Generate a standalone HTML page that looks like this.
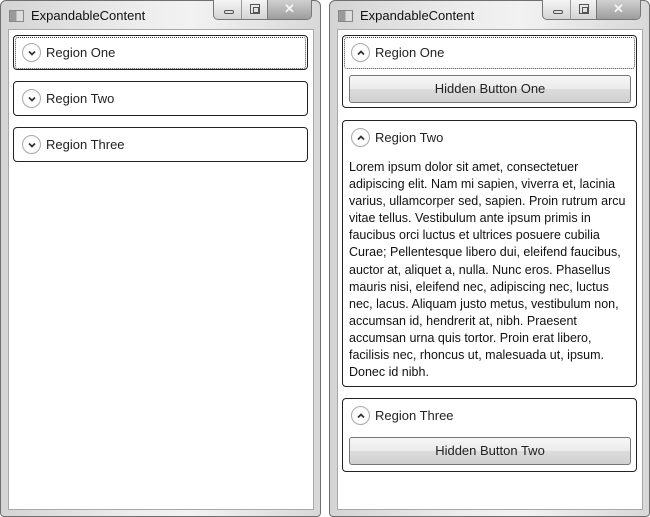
<!DOCTYPE html>
<html><head><meta charset="utf-8"><style>
*{margin:0;padding:0;box-sizing:border-box}
body{width:650px;height:517px;background:#fff;position:relative;overflow:hidden;font-family:"Liberation Sans",sans-serif;color:#222}
.win{position:absolute;top:0;width:321px;height:517px;border:1px solid #6f6f6f;border-radius:6px 6px 4px 4px;background:linear-gradient(90deg,#d4d4d4,#ececec 40%,#f2f2f2 60%,#d8d8d8)}
.client{position:absolute;left:7px;top:28px;width:306px;height:481px;background:#fff;border:1px solid #a8a8a8}
.title{position:absolute;left:30px;top:7px;font-size:13px;color:#111}
.ico{position:absolute;left:8px;top:9px;width:15px;height:12px;border:1px solid #888;background:linear-gradient(90deg,#999 50%,#ddd 50%)}
.btns{position:absolute;left:212px;top:-1px;width:99px;height:20px;border:1px solid #777;border-top:none;border-radius:0 0 5px 5px;background:linear-gradient(#f4f4f4,#d4d4d4);overflow:hidden}
.btns .c{position:absolute;right:0;top:0;width:44px;height:20px;background:linear-gradient(#d0d0d0,#9a9a9a);border-left:1px solid #777;color:#f4f4f4;font-size:13px;font-weight:bold;text-align:center;line-height:18px}
.btns .m{position:absolute;left:10px;top:10px;width:10px;height:4px;border:1px solid #555;border-radius:2px}
.btns .x{position:absolute;left:36px;top:4px;width:10px;height:10px;border:1px solid #555}
.btns .x:after{content:"";position:absolute;left:2px;top:2px;width:4px;height:4px;border:1px solid #555}
.btns .sep{position:absolute;left:27px;top:0;width:1px;height:20px;background:#999}
.exp{position:absolute;border:1px solid #222;border-radius:4px;background:#fff}
.hdr{position:absolute;left:8px;top:7px;height:20px;font-size:13px;line-height:20px;padding-left:24px;color:#222}
.circ{position:absolute;left:0;top:0;width:19px;height:19px;border-radius:50%;border:1px solid #aaa;background:radial-gradient(#fff 50%,#eee)}
.circ svg{position:absolute;left:4px;top:4px}
.focus{position:absolute;left:1px;top:1px;right:1px;height:32px;border:1px dotted #444;border-radius:3px}
.btn{position:absolute;border:1px solid #777;border-radius:3px;background:linear-gradient(#f6f6f6 0,#ebebeb 50%,#dcdcdc 50%,#d0d0d0);font-size:13px;text-align:center;color:#222}
.txt{position:absolute;left:6px;top:38px;font-size:12.5px;line-height:17.1px;white-space:nowrap;color:#111}
</style></head><body>
<div class="win" style="left:0">
 <div class="ico"></div><div class="title">ExpandableContent</div>
 <div class="btns"><div class="m"></div><div class="sep"></div><div class="x"></div><div class="c">✕</div></div>
 <div class="client"></div>
</div>
<div class="win" style="left:329px">
 <div class="ico"></div><div class="title">ExpandableContent</div>
 <div class="btns"><div class="m"></div><div class="sep"></div><div class="x"></div><div class="c">✕</div></div>
 <div class="client"></div>
</div>

<div class="exp" style="left:13px;top:35px;width:295px;height:35px"><div class="focus"></div>
 <div class="hdr"><div class="circ"><svg width="10" height="10"><path d="M2 3.5 L5 6.5 L8 3.5" stroke="#333" stroke-width="1.8" fill="none"/></svg></div>Region One</div></div>
<div class="exp" style="left:13px;top:81px;width:295px;height:35px">
 <div class="hdr"><div class="circ"><svg width="10" height="10"><path d="M2 3.5 L5 6.5 L8 3.5" stroke="#333" stroke-width="1.8" fill="none"/></svg></div>Region Two</div></div>
<div class="exp" style="left:13px;top:127px;width:295px;height:35px">
 <div class="hdr"><div class="circ"><svg width="10" height="10"><path d="M2 3.5 L5 6.5 L8 3.5" stroke="#333" stroke-width="1.8" fill="none"/></svg></div>Region Three</div></div>

<div class="exp" style="left:342px;top:35px;width:295px;height:73px"><div class="focus"></div>
 <div class="hdr"><div class="circ"><svg width="10" height="10"><path d="M2 6.5 L5 3.5 L8 6.5" stroke="#333" stroke-width="1.8" fill="none"/></svg></div>Region One</div>
 <div class="btn" style="left:6px;top:39px;width:282px;height:28px;line-height:26px">Hidden Button One</div></div>
<div class="exp" style="left:342px;top:120px;width:295px;height:267px">
 <div class="hdr"><div class="circ"><svg width="10" height="10"><path d="M2 6.5 L5 3.5 L8 6.5" stroke="#333" stroke-width="1.8" fill="none"/></svg></div>Region Two</div>
 <div class="txt">Lorem ipsum dolor sit amet, consectetuer<br>adipiscing elit. Nam mi sapien, viverra et, lacinia<br>varius, ullamcorper sed, sapien. Proin rutrum arcu<br>vitae tellus. Vestibulum ante ipsum primis in<br>faucibus orci luctus et ultrices posuere cubilia<br>Curae; Pellentesque libero dui, eleifend faucibus,<br>auctor at, aliquet a, nulla. Nunc eros. Phasellus<br>mauris nisi, eleifend nec, adipiscing nec, luctus<br>nec, lacus. Aliquam justo metus, vestibulum non,<br>accumsan id, hendrerit at, nibh. Praesent<br>accumsan urna quis tortor. Proin erat libero,<br>facilisis nec, rhoncus ut, malesuada ut, ipsum.<br>Donec id nibh.</div></div>
<div class="exp" style="left:342px;top:398px;width:295px;height:74px">
 <div class="hdr"><div class="circ"><svg width="10" height="10"><path d="M2 6.5 L5 3.5 L8 6.5" stroke="#333" stroke-width="1.8" fill="none"/></svg></div>Region Three</div>
 <div class="btn" style="left:6px;top:38px;width:282px;height:28px;line-height:26px">Hidden Button Two</div></div>
</body></html>
